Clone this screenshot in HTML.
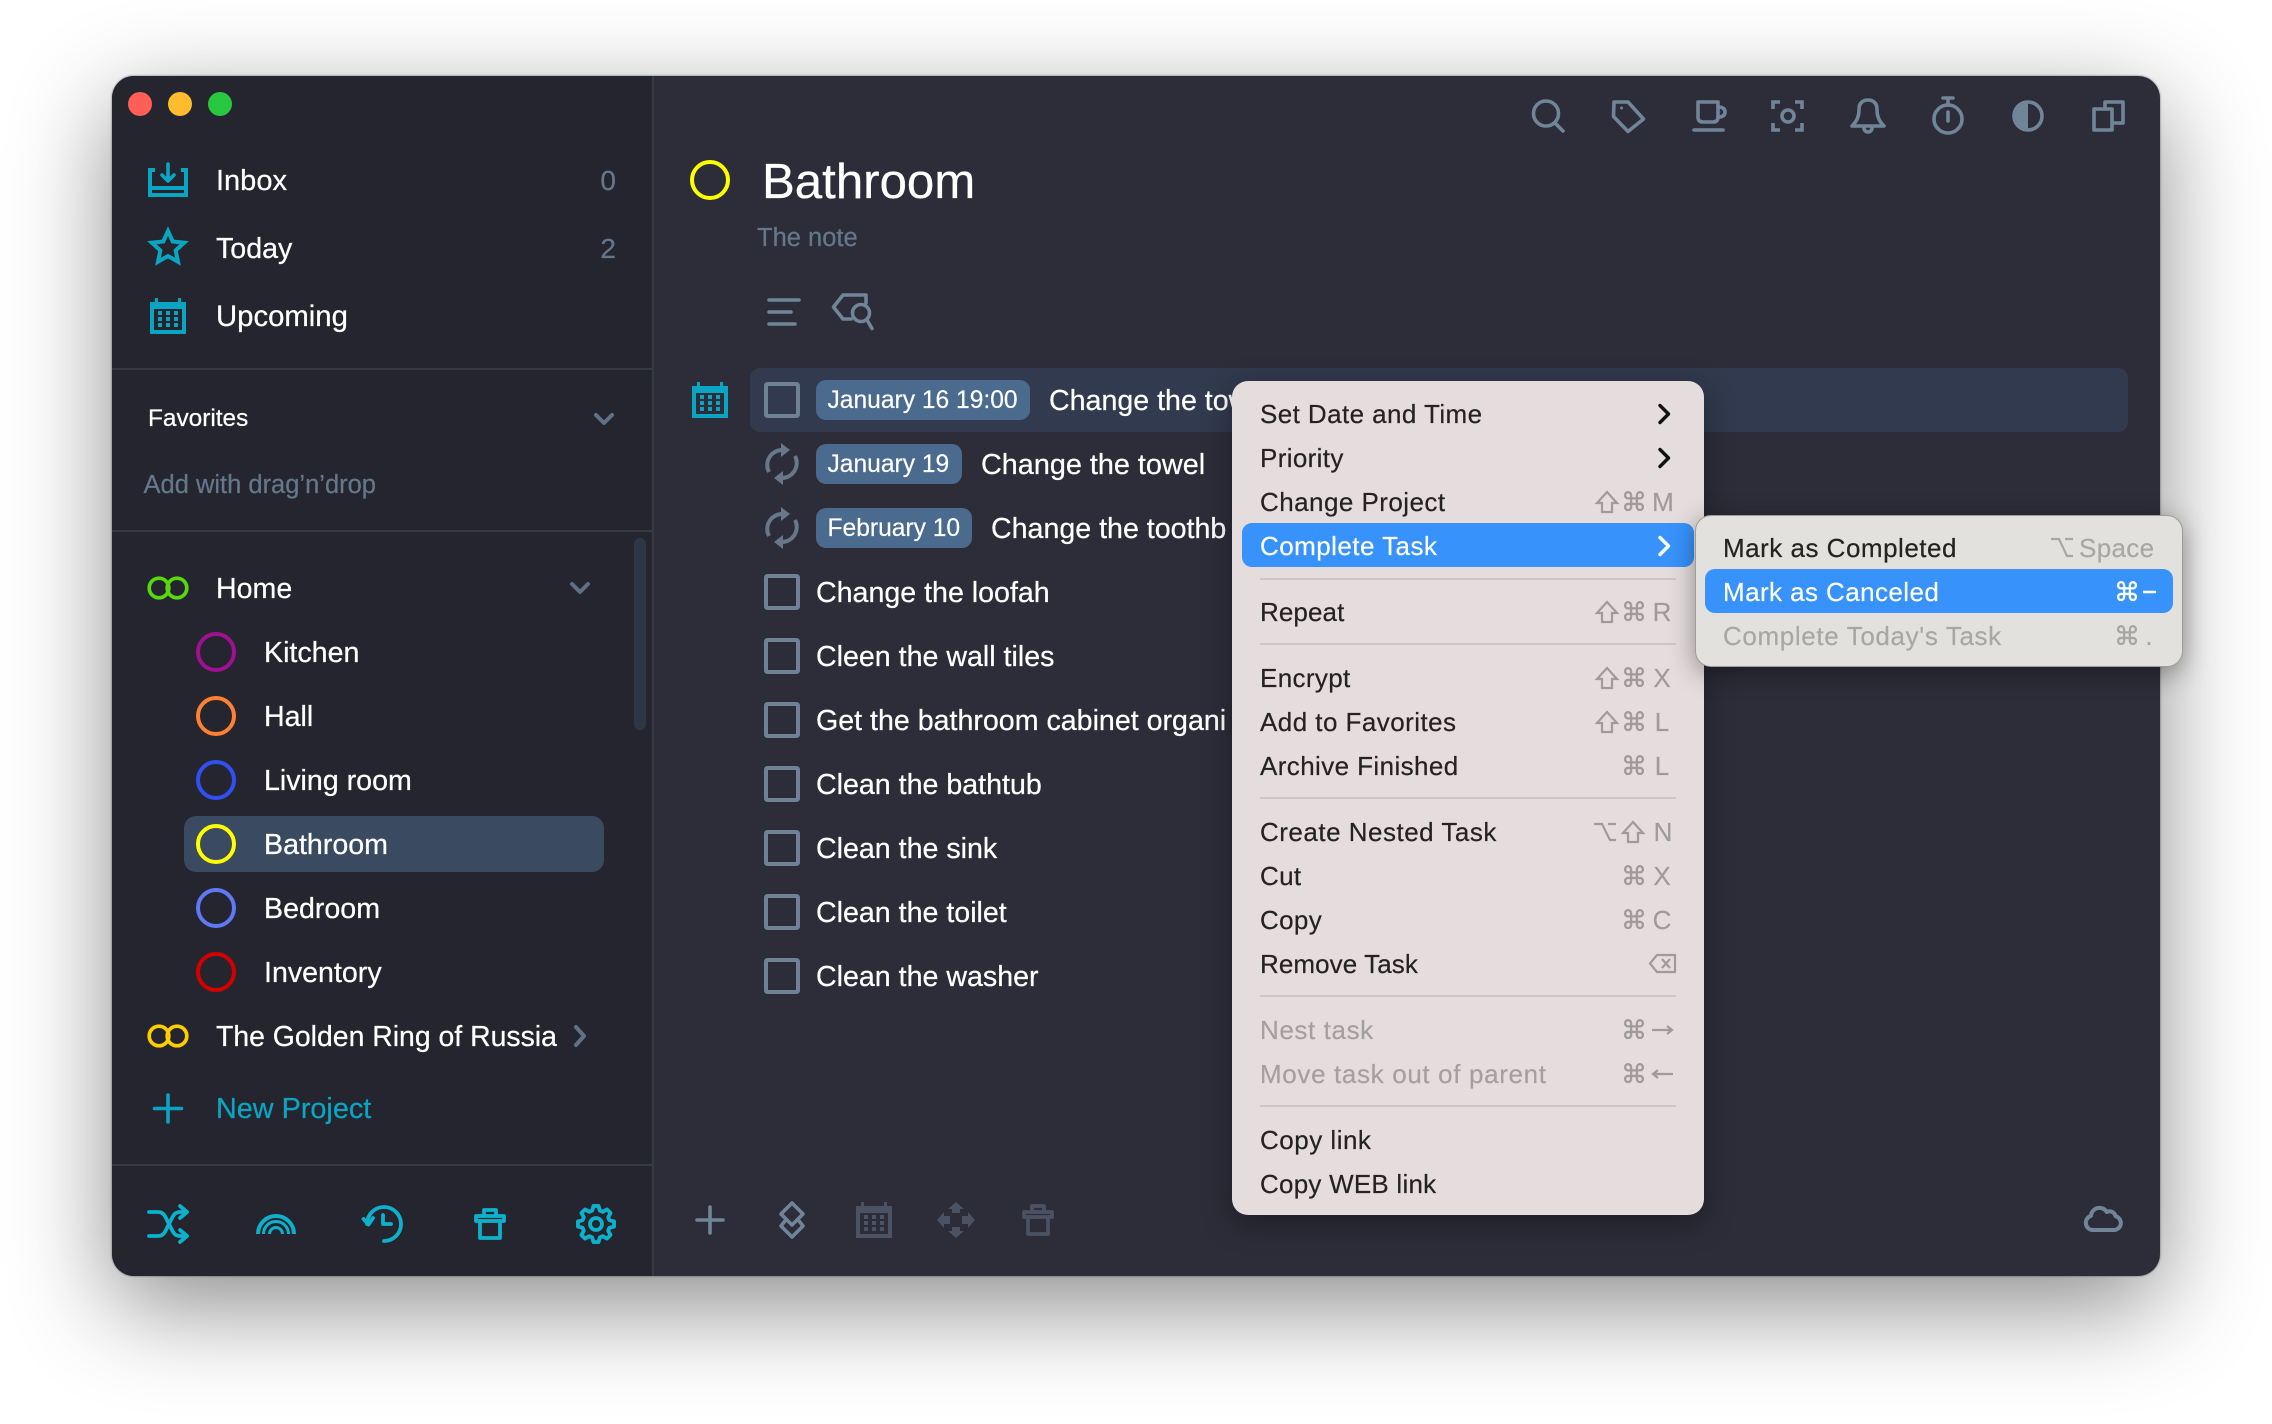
<!DOCTYPE html>
<html lang="en"><head><meta charset="utf-8"><title>Bathroom</title>
<style>
html,body{margin:0;padding:0;background:#fff;width:2272px;height:1424px;overflow:hidden}
body{position:relative;font-family:"Liberation Sans",Arimo,Helvetica,sans-serif}
#win{position:absolute;left:112px;top:76px;width:2048px;height:1200px;border-radius:22px;background:#2c2d39;box-shadow:0 30px 100px rgba(0,0,0,.46),0 0 2px rgba(0,0,0,.5)}
#side{position:absolute;left:112px;top:76px;width:540px;height:1200px;border-radius:22px 0 0 22px;background:#24252e;border-right:2px solid #373945}
.b{position:absolute;background:#373945;height:2px;left:112px;width:540px}
.t{position:absolute;white-space:nowrap;height:40px;line-height:40px;margin-top:-19px;color:#fff;font-size:28.6px;-webkit-text-stroke:.25px currentColor}
.n{font-size:29px}
.m{position:absolute;white-space:nowrap;height:40px;line-height:40px;margin-top:-20px;color:#242222;font-size:26px;letter-spacing:.35px;-webkit-text-stroke:.2px currentColor}
.dim{color:#a5a0a0}
.k{position:absolute;white-space:nowrap;height:40px;line-height:40px;margin-top:-20px;transform:translateX(-50%);color:#a09b9b;font-size:26px;-webkit-text-stroke:.2px currentColor}
.g{font-family:"DejaVu Sans",sans-serif;font-size:26px;margin-top:-19px;-webkit-text-stroke:.4px currentColor}
.badge{position:absolute;left:816px;height:40px;line-height:41.5px;border-radius:10px;background:#4a6a8e;color:#fff;font-size:24.6px;padding-left:11.5px;box-sizing:border-box;white-space:nowrap;-webkit-text-stroke:.2px currentColor}
.sep{position:absolute;left:1260px;width:416px;height:2px;background:#cbc5c5}
svg{position:absolute;left:0;top:0}
#menu{position:absolute;left:1232px;top:381px;width:472px;height:834px;border-radius:16px;background:#e5dddd;box-shadow:0 8px 30px rgba(0,0,0,.35)}
#sub{position:absolute;left:1695px;top:515px;width:488px;height:152px;box-sizing:border-box;border:1px solid rgba(0,0,0,.3);border-radius:16px;background:#e3e1dd;box-shadow:0 6px 26px rgba(0,0,0,.38)}
.hi{position:absolute;background:#3793fb;border-radius:10px;height:44px}
</style></head><body>
<div id="win"></div>
<div id="side"></div>
<div class="b" style="top:368px"></div>
<div class="b" style="top:530px"></div>
<div class="b" style="top:1164px"></div>
<div style="position:absolute;left:634px;top:538px;width:12px;height:192px;border-radius:6px;background:#2f3747"></div>
<div style="position:absolute;left:184px;top:816px;width:420px;height:56px;border-radius:12px;background:#3a4a60"></div>
<div style="position:absolute;left:750px;top:368px;width:1378px;height:64px;border-radius:10px;background:#313a4e"></div>

<svg width="2272" height="1424" viewBox="0 0 2272 1424" fill="none" stroke-linecap="round" stroke-linejoin="round">
<defs>
<g id="cal">
<path d="M2 6H34V34H2Z" stroke-width="4" stroke-linejoin="miter"/>
<path d="M2 9H34" stroke-width="4" stroke-linecap="butt"/>
<path d="M6.500 0V5M29.500 0V5" stroke-width="3" stroke-linecap="butt"/>
<g fill="currentColor" stroke="none"><rect x="8" y="13" width="4" height="4"/><rect x="16" y="13" width="4" height="4"/><rect x="24" y="13" width="4" height="4"/><rect x="8" y="19" width="4" height="4"/><rect x="16" y="19" width="4" height="4"/><rect x="24" y="19" width="4" height="4"/><rect x="8" y="25" width="4" height="4"/><rect x="16" y="25" width="4" height="4"/><rect x="24" y="25" width="4" height="4"/></g>
</g>
<g id="trash" stroke-width="3.800" stroke-linejoin="round">
<path d="M2 8H30V13H2Z"/><path d="M10 8V2H22V8"/><path d="M6 13V30H26V13"/>
</g>
<g id="rep" stroke="#66788a" stroke-width="4" stroke-linecap="butt">
<path d="M-13 8A15 15 0 0 1 0 -14"/><path d="M13 -8A15 15 0 0 1 0 14"/>
<path d="M-1 -21L8 -14L-1 -7Z" fill="#66788a" stroke="none"/><path d="M1 21L-8 14L1 7Z" fill="#66788a" stroke="none"/>
</g>
<path id="shift" d="M0 -10L10 1H5V10H-5V1H-10Z" stroke="#a09b9b" stroke-width="2.200" fill="none" stroke-linejoin="miter"/>
</defs>
<circle cx="140" cy="104" r="12" fill="#ff5f57"/><circle cx="180" cy="104" r="12" fill="#febc2e"/><circle cx="220" cy="104" r="12" fill="#28c840"/>

<!-- nav icons -->
<g stroke="#0aa5c2" stroke-width="4" color="#0aa5c2">
<path d="M155 170H150V195H186V170H181" stroke-linecap="butt" stroke-linejoin="miter"/><path d="M150 188H186" stroke-linecap="butt"/>
<path d="M168 164V180M162 175L168 181L174 175" stroke-width="3.600"/>
<path d="M168 231L172.700 241.500L184.200 242.700L175.600 250.500L178 261.800L168 256L158 261.800L160.400 250.500L151.800 242.700L163.300 241.500Z" stroke-linejoin="miter" stroke-miterlimit="6"/>
<use href="#cal" x="150" y="298"/>
<path d="M168 1095V1122M154.500 1108.500H181.500" stroke-width="3.600"/>
<!-- bottom sidebar -->
<path d="M149 1212H158C162 1212 164 1214 166 1218L172 1230C174 1234 176 1236 180 1236H186M149 1236H158C162 1236 164 1234 166 1230L172 1218C174 1214 176 1212 180 1212H186" stroke-width="3.800" stroke="#0eb1cc"/>
<path d="M180 1206L187 1212L180 1218M180 1230L187 1236L180 1242" stroke-width="3.800" stroke="#0eb1cc"/>
<g stroke="#0eb1cc" stroke-linecap="butt"><path d="M258 1234A18 18 0 0 1 294 1234" stroke-width="4"/><path d="M263.500 1234A12.500 12.500 0 0 1 288.500 1234" stroke-width="3"/><path d="M269.500 1234A6.500 6.500 0 0 1 282.500 1234" stroke-width="3"/></g>
<g stroke="#0eb1cc" stroke-width="3.800"><path d="M384 1241A17 17 0 1 0 367 1224"/><path d="M363.500 1219L368.500 1224.500L373 1218"/><path d="M383 1215V1224H391"/></g>
<g transform="translate(474 1208)" stroke="#0eb1cc"><use href="#trash"/></g>
<g transform="translate(596 1224) scale(.96)" stroke="#0eb1cc" stroke-width="4"><path d="M18.820 -2.640L18.820 2.640L13.940 4L12.680 7.030L15.170 11.430L11.430 15.170L7.030 12.680L4 13.940L2.640 18.820L-2.640 18.820L-4 13.940L-7.030 12.680L-11.430 15.170L-15.170 11.430L-12.680 7.030L-13.940 4L-18.820 2.640L-18.820 -2.640L-13.940 -4L-12.680 -7.030L-15.170 -11.430L-11.430 -15.170L-7.030 -12.680L-4 -13.940L-2.640 -18.820L2.640 -18.820L4 -13.940L7.030 -12.680L11.430 -15.170L15.170 -11.430L12.680 -7.030L13.940 -4Z"/><circle r="6.200"/></g>
</g>
<g stroke="#5f7186" stroke-width="4"><path d="M596 415L604 423L612 415"/><path d="M572 584L580 592L588 584"/><path d="M576 1027L584 1036L576 1045"/></g>

<!-- projects -->
<g stroke-width="4">
<g stroke="#58d80f" stroke-width="3.700"><circle cx="159" cy="588" r="9.800"/><circle cx="177" cy="588" r="9.800"/></g>
<g stroke="#ffcc00" stroke-width="3.700"><circle cx="159" cy="1036" r="9.800"/><circle cx="177" cy="1036" r="9.800"/></g>
<circle cx="216" cy="652" r="18" stroke="#a0108f"/><circle cx="216" cy="716" r="18" stroke="#ff8030"/><circle cx="216" cy="780" r="18" stroke="#3050f5"/><circle cx="216" cy="844" r="18" stroke="#ffff00"/><circle cx="216" cy="908" r="18" stroke="#5f78f5"/><circle cx="216" cy="972" r="18" stroke="#d40000"/>
<circle cx="710" cy="180" r="18" stroke="#ffff00"/>
</g>

<!-- top toolbar -->
<g stroke="#718599" stroke-width="3.600">
<circle cx="1546" cy="113.500" r="12.500"/><path d="M1555 123L1563 131"/>
<path d="M1614 102H1628L1643.500 119L1628 131.500L1613.500 116.500Z"/><circle cx="1621.500" cy="108" r="1.500" fill="#718599" stroke="none"/>
<path d="M1698 102H1718V117Q1718 122 1713 122H1703Q1698 122 1698 117Z"/><path d="M1718 107Q1725 107 1725 112Q1725 117 1718 117"/><path d="M1694 130H1723"/>
<path d="M1773 109V102H1780M1795 102H1802V109M1802 123V130H1795M1780 130H1773V123" stroke-linecap="butt" stroke-linejoin="miter"/><circle cx="1788" cy="116" r="6"/>
<path d="M1852 126C1858 120 1859 115 1859 109C1859 103 1863 100 1868 100C1873 100 1877 103 1877 109C1877 115 1878 120 1884 126Z"/><path d="M1864 128A4 4 0 0 0 1872 128"/>
<circle cx="1948" cy="119" r="14"/><path d="M1943 98H1953M1948 98V105M1948 112V121"/>
<circle cx="2028" cy="116" r="14"/><path d="M2028 102A14 14 0 0 0 2028 130Z" fill="#718599" stroke="none"/>
<path d="M2105 109V102H2123V123H2113"/><path d="M2094 109H2112V130H2094Z"/>
<!-- list toolbar -->
<path d="M769 300H799M769 312H791M769 324H795"/>
<path d="M866 303V295H843L833.500 307L843 319H851"/><circle cx="861" cy="313" r="8.500"/><path d="M867 320L872 328.500"/>
<!-- bottom toolbar -->
<path d="M710 1207V1233M697 1220H723"/>
<path d="M792 1203L803 1214L792 1225L781 1214Z"/><path d="M785 1221L781 1226L792 1237L803 1226L799 1221"/>
<path d="M2092 1230H2114A7 7 0 0 0 2115.500 1216.200A6 6 0 0 0 2106.800 1212A8.500 8.500 0 0 0 2091 1215.800A7.300 7.300 0 0 0 2092 1230Z" stroke-width="4"/>
</g>
<g stroke="#4a5263" color="#4a5263">
<use href="#cal" x="856" y="1202" stroke-width="4"/>
<g transform="translate(1022 1204)"><use href="#trash"/></g>
<g fill="#4a5263" stroke="none"><path d="M956 1202L964 1209H960V1213H952V1209H948Z"/><path d="M956 1238L964 1231H960V1227H952V1231H948Z"/><path d="M937 1220L944 1212V1216H950V1224H944V1228Z"/><path d="M975 1220L968 1212V1216H962V1224H968V1228Z"/></g>
</g>

<!-- tasks -->
<use href="#cal" x="692" y="382" stroke="#0aa5c2" color="#0aa5c2"/>
<use href="#rep" x="782" y="464"/><use href="#rep" x="782" y="528"/>
<g stroke="#6f8295" stroke-width="4" stroke-linejoin="miter">
<rect x="766" y="384" width="32" height="32" rx="1.500"/><rect x="766" y="576" width="32" height="32" rx="1.500"/><rect x="766" y="640" width="32" height="32" rx="1.500"/><rect x="766" y="704" width="32" height="32" rx="1.500"/><rect x="766" y="768" width="32" height="32" rx="1.500"/><rect x="766" y="832" width="32" height="32" rx="1.500"/><rect x="766" y="896" width="32" height="32" rx="1.500"/><rect x="766" y="960" width="32" height="32" rx="1.500"/>
</g>
</svg>

<div class="t n" style="left:216px;top:180px">Inbox</div>
<div class="t n" style="left:216px;top:248px;font-size:28.6px">Today</div>
<div class="t n" style="left:216px;top:316px;font-size:29.3px">Upcoming</div>
<div class="t" style="right:1656px;top:180px;color:#64778b;font-size:28px">0</div>
<div class="t" style="right:1656px;top:248px;color:#64778b;font-size:28px">2</div>
<div class="t" style="left:148px;top:418px;font-size:24.4px">Favorites</div>
<div class="t" style="left:143.500px;top:483.500px;font-size:25.500px;color:#64778b">Add with drag’n’drop</div>
<div class="t" style="left:216px;top:588px">Home</div>
<div class="t" style="left:264px;top:652px">Kitchen</div>
<div class="t" style="left:264px;top:716px">Hall</div>
<div class="t" style="left:264px;top:780px">Living room</div>
<div class="t" style="left:264px;top:844px">Bathroom</div>
<div class="t" style="left:264px;top:908px">Bedroom</div>
<div class="t" style="left:264px;top:972px">Inventory</div>
<div class="t" style="left:216px;top:1036px;font-size:28.4px">The Golden Ring of Russia</div>
<div class="t" style="left:216px;top:1108px;color:#0aa5c2;font-size:28.8px">New Project</div>

<div class="t" style="left:762px;top:181.500px;font-size:49.2px;height:60px;line-height:60px;margin-top:-30px">Bathroom</div>
<div class="t" style="left:757px;top:237px;font-size:25.500px;color:#64778b">The note</div>

<div class="badge" style="top:380px;width:214px">January 16 19:00</div>
<div class="badge" style="top:444px;width:146px">January 19</div>
<div class="badge" style="top:508px;width:156px">February 10</div>
<div class="t" style="left:1049px;top:400px">Change the towels</div>
<div class="t" style="left:981px;top:464px;font-size:28.8px">Change the towel</div>
<div class="t" style="left:991px;top:528px">Change the toothb</div>
<div class="t" style="left:816px;top:592px">Change the loofah</div>
<div class="t" style="left:816px;top:656px">Cleen the wall tiles</div>
<div class="t" style="left:816px;top:720px">Get the bathroom cabinet organi</div>
<div class="t" style="left:816px;top:784px">Clean the bathtub</div>
<div class="t" style="left:816px;top:848px">Clean the sink</div>
<div class="t" style="left:816px;top:912px">Clean the toilet</div>
<div class="t" style="left:816px;top:976px">Clean the washer</div>

<div id="menu"></div>
<div class="hi" style="left:1242px;top:523px;width:452px"></div>
<div class="sep" style="top:578px"></div><div class="sep" style="top:643px"></div><div class="sep" style="top:797px"></div><div class="sep" style="top:995px"></div><div class="sep" style="top:1105px"></div>
<div class="m" style="left:1260px;top:414px;letter-spacing:.42px">Set Date and Time</div>
<div class="m" style="left:1260px;top:458px">Priority</div>
<div class="m" style="left:1260px;top:502px;letter-spacing:.45px">Change Project</div>
<div class="m" style="left:1260px;top:546px;color:#fff;letter-spacing:.45px">Complete Task</div>
<div class="m" style="left:1260px;top:612px;letter-spacing:.1px">Repeat</div>
<div class="m" style="left:1260px;top:678px">Encrypt</div>
<div class="m" style="left:1260px;top:722px;letter-spacing:.45px">Add to Favorites</div>
<div class="m" style="left:1260px;top:766px;letter-spacing:.4px">Archive Finished</div>
<div class="m" style="left:1260px;top:832px;letter-spacing:.5px">Create Nested Task</div>
<div class="m" style="left:1260px;top:876px">Cut</div>
<div class="m" style="left:1260px;top:920px">Copy</div>
<div class="m" style="left:1260px;top:964px;letter-spacing:.08px">Remove Task</div>
<div class="m dim" style="left:1260px;top:1030px;letter-spacing:.6px">Nest task</div>
<div class="m dim" style="left:1260px;top:1074px;letter-spacing:.65px">Move task out of parent</div>
<div class="m" style="left:1260px;top:1140px;letter-spacing:.5px">Copy link</div>
<div class="m" style="left:1260px;top:1184px;letter-spacing:.23px">Copy WEB link</div>

<div class="k g" style="left:1634px;top:502px">⌘</div><div class="k" style="left:1663px;top:502px">M</div>
<div class="k g" style="left:1634px;top:612px">⌘</div><div class="k" style="left:1662px;top:612px">R</div>
<div class="k g" style="left:1634px;top:678px">⌘</div><div class="k" style="left:1662px;top:678px">X</div>
<div class="k g" style="left:1634px;top:722px">⌘</div><div class="k" style="left:1662px;top:722px">L</div>
<div class="k g" style="left:1634px;top:766px">⌘</div><div class="k" style="left:1662px;top:766px">L</div>
<div class="k" style="left:1663px;top:832px">N</div>
<div class="k g" style="left:1634px;top:876px">⌘</div><div class="k" style="left:1662px;top:876px">X</div>
<div class="k g" style="left:1634px;top:920px">⌘</div><div class="k" style="left:1662px;top:920px">C</div>
<div class="k g" style="left:1634px;top:1030px">⌘</div>
<div class="k g" style="left:1634px;top:1074px">⌘</div>

<div id="sub"></div>
<div class="hi" style="left:1705px;top:569px;width:468px"></div>
<div class="m" style="left:1723px;top:548px;letter-spacing:.5px">Mark as Completed</div>
<div class="m" style="left:1723px;top:592px;color:#fff;letter-spacing:.42px">Mark as Canceled</div>
<div class="m" style="left:1723px;top:636px;color:#a9a7a4;letter-spacing:.63px">Complete Today's Task</div>
<div class="m" style="left:2079px;top:548px;color:#a9a7a4">Space</div>
<div class="k g" style="left:2127px;top:592px;color:#fff">⌘</div>
<div class="k g" style="left:2127px;top:636px;color:#a9a7a4">⌘</div>
<div class="k" style="left:2149px;top:636px;color:#a9a7a4">.</div>

<svg width="2272" height="1424" viewBox="0 0 2272 1424" fill="none" stroke-width="3.400" stroke-linecap="round" stroke-linejoin="round">
<path d="M1660 405.500L1668.500 414L1660 422.500M1660 449.500L1668.500 458L1660 466.500" stroke="#111"/>
<path d="M1660 537.500L1668.500 546L1660 554.500" stroke="#fff"/>
<use href="#shift" x="1607" y="502"/><use href="#shift" x="1607" y="612"/><use href="#shift" x="1607" y="678"/><use href="#shift" x="1607" y="722"/><use href="#shift" x="1633" y="832"/>
<g stroke="#a09b9b" stroke-width="2.200" stroke-linecap="butt" stroke-linejoin="miter">
<path d="M1594 824H1602L1610 840H1616M1608 824H1616"/>
<path d="M2051 539H2059L2067 556H2073M2065 539H2073" stroke="#a9a7a4"/>
<path d="M1657 955H1675V972H1657L1650 963.500Z"/><path d="M1662 959L1670 968M1670 959L1662 968"/>
<path d="M1652 1030H1672M1667 1026L1672 1030L1667 1034"/>
<path d="M1673 1074H1653M1658 1070L1653 1074L1658 1078"/>
</g>
<path d="M2143 592H2156" stroke="#fff" stroke-width="2.500" stroke-linecap="butt"/>
</svg>
</body></html>
